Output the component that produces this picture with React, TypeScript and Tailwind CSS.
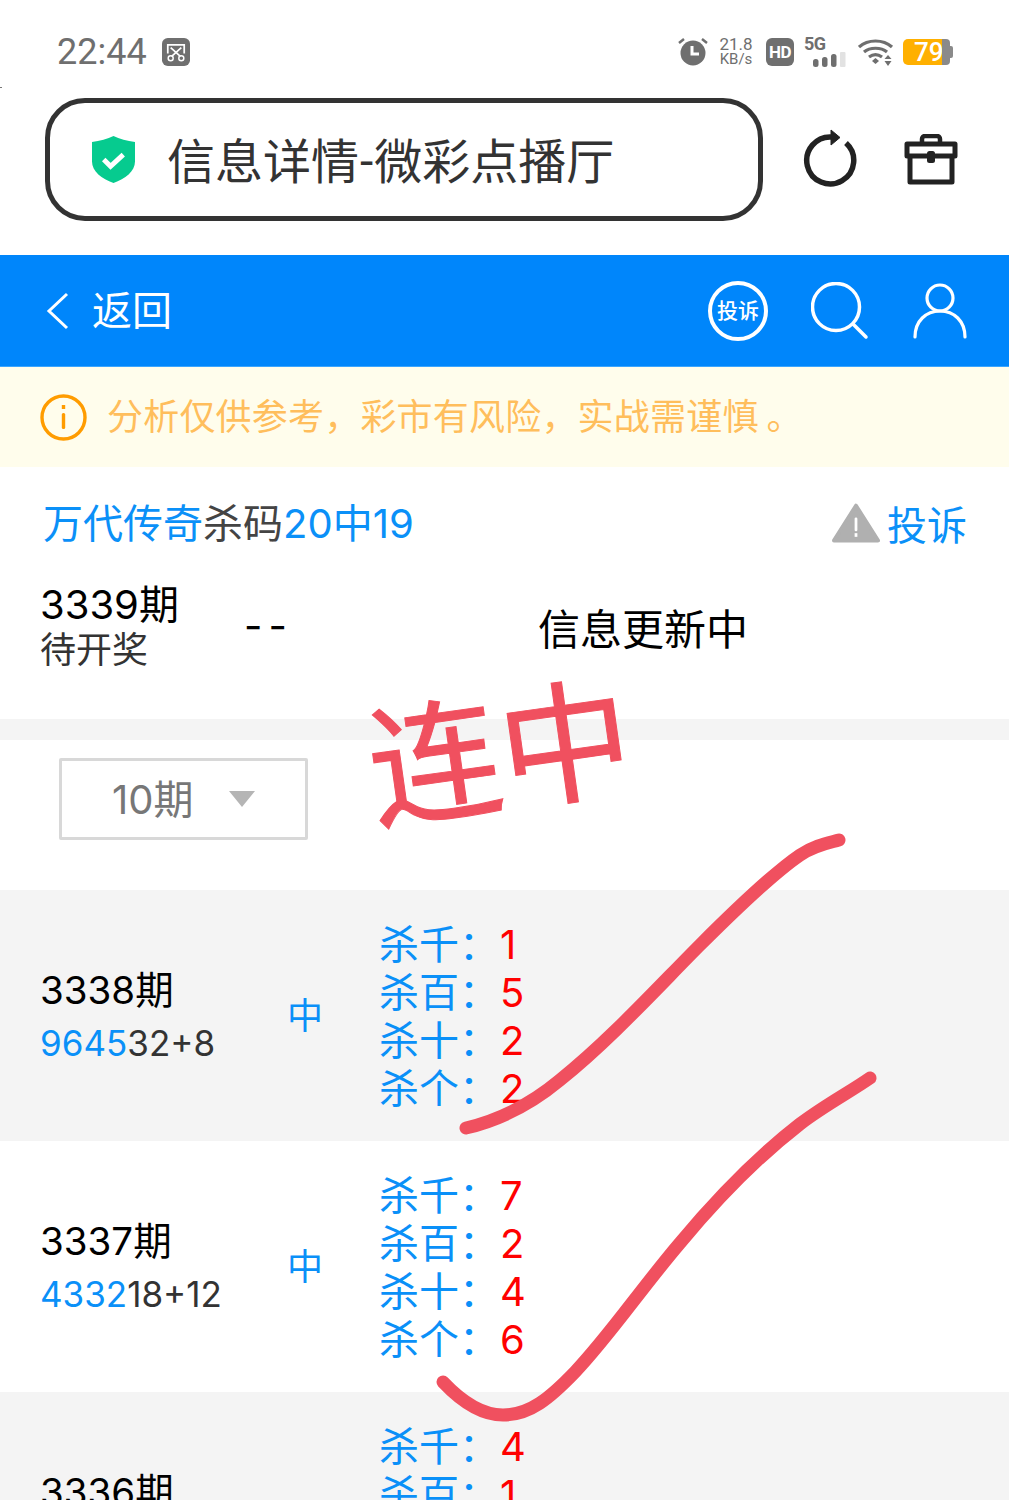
import React from 'react';

const rows = [
  { issue: '3338期', hit: '9645', rest: '32+8', kills: ['1', '5', '2', '2'], bg: 'bg-[#f4f4f4]' },
  { issue: '3337期', hit: '4332', rest: '18+12', kills: ['7', '2', '4', '6'], bg: 'bg-white' },
  { issue: '3336期', hit: '', rest: '', kills: ['4', '1', '', ''], bg: 'bg-[#f4f4f4]' },
];
const killLabels = ['杀千：', '杀百：', '杀十：', '杀个：'];

const StatusIcons: React.FC = () => (
  <div className="flex items-center font-['Roboto'] text-[#6f6f6f]">
    {/* alarm */}
    <svg width="30" height="30" viewBox="0 0 30 30" className="mr-[11px]">
      <circle cx="15" cy="16" r="12.500" fill="#6f6f6f" />
      <path d="M14 9v8h7" fill="none" stroke="#fff" strokeWidth="3" />
      <path d="M1 6l5-4M29 6l-5-4" stroke="#6f6f6f" strokeWidth="2.500" />
    </svg>
    <div className="mr-[13px] flex w-[34px] flex-col items-center text-[17px] leading-[15px]">
      <span>21.8</span>
      <span className="text-[15px]">KB/s</span>
    </div>
    {/* HD */}
    <div className="mr-[10px] flex h-[28px] w-[28px] items-center justify-center rounded-[6px] bg-[#6f6f6f] text-[17px] leading-none font-bold tracking-[-0.5px] text-white">
      HD
    </div>
    {/* 5G signal */}
    <div className="mr-[12px] flex h-[30px] w-[42px] flex-col">
      <span className="text-[18px] leading-[14px] font-bold tracking-[-0.5px]">5G</span>
      <svg width="42" height="15" viewBox="0 0 42 15" className="mt-[1px]">
        <rect x="9" y="7" width="5.500" height="8" rx="2.500" fill="#6f6f6f" />
        <rect x="18" y="5" width="5.500" height="10" rx="2.500" fill="#6f6f6f" />
        <rect x="27" y="2" width="5.500" height="13" rx="2.500" fill="#6f6f6f" />
        <rect x="36" y="0" width="5.500" height="15" rx="1" fill="#e2e2e2" />
      </svg>
    </div>
    {/* wifi */}
    <svg width="36" height="28" viewBox="0 0 36 28" className="mr-[9px]">
      <path d="M1 9C10 1 25 1 34 9M6 14c6-5 17-5 23 0M11 19c4-3 9-3 13 0" fill="none" stroke="#6f6f6f" strokeWidth="3.200" />
      <path d="M14 23l3.500-3 3.500 3-3.500 3z" fill="#6f6f6f" />
      <path d="M30 17l3.500 4h-7zM30 28l3.500-5h-7z" fill="#6f6f6f" />
    </svg>
    {/* battery */}
    <div className="flex items-center">
      <div className="flex h-[26px] w-[39px] items-center rounded-l-[5px] bg-[#ffb000] pl-[11px] text-[26px] leading-none font-medium whitespace-nowrap text-white">
        79
      </div>
      <div className="h-[26px] w-[8px] rounded-r-[4px] bg-[#8a8a8a]" />
      <div className="h-[12px] w-[3px] rounded-r-[2px] bg-[#8a8a8a]" />
    </div>
  </div>
);

export default function App() {
  return (
    <div
      className="relative h-[1500px] w-[1009px] overflow-hidden bg-white"
      style={{ fontFamily: 'Inter, "Noto Sans CJK SC", sans-serif' }}
    >
      <div className="absolute top-[87px] left-0 h-[1px] w-[2px] bg-[#777]" />

      {/* Status bar */}
      <div className="flex h-[98px] items-center justify-between pt-[6px] pr-[56px] pl-[57px]">
        <div className="flex items-center">
          <span className="font-['Roboto'] text-[36px] leading-none text-[#6f6f6f]">22:44</span>
          <svg width="28" height="28" viewBox="0 0 29 29" className="ml-[15px]">
            <rect width="29" height="29" rx="6" fill="#6f6f6f" />
            <path d="M6 16V7h17v9" fill="none" stroke="#fff" strokeWidth="1.800" />
            <path d="M9 10l10 9M20 10l-10 9" stroke="#fff" strokeWidth="1.800" />
            <circle cx="9" cy="21" r="2.600" fill="none" stroke="#fff" strokeWidth="1.500" />
            <circle cx="20" cy="21" r="2.600" fill="none" stroke="#fff" strokeWidth="1.500" />
          </svg>
        </div>
        <StatusIcons />
      </div>

      {/* Address bar */}
      <div className="flex h-[157px] items-start pl-[45px]">
        <div className="flex h-[123px] w-[718px] items-center rounded-[40px] border-[5px] border-[#333333] pl-[42px]">
          <svg width="43" height="47" viewBox="0 0 44 48">
            <path d="M22 0c6 3 14 5 22 6v20c0 10-10 18-22 22C10 44 0 36 0 26V6c8-1 16-3 22-6z" fill="#06cb8f" />
            <path d="M12 24l7 7 13-12" fill="none" stroke="#fff" strokeWidth="5" />
          </svg>
          <span className="mt-[4px] ml-[32px] flex items-center text-[48px] leading-none whitespace-nowrap text-[#333333]">
            信息详情<span className="mx-[1px] font-['Roboto']">-</span>微彩点播厅
          </span>
        </div>
        <svg width="56" height="60" viewBox="0 0 56 60" className="mt-[31px] ml-[38px]">
          <path d="M31 8A23.500 23.500 0 1 0 45 14" fill="none" stroke="#222" strokeWidth="5.500" />
          <path d="M30 1l9 7.500-9 7.500z" fill="#222" stroke="#222" strokeWidth="1" strokeLinejoin="round" />
        </svg>
        <svg width="54" height="52" viewBox="0 0 54 52" className="mt-[36px] ml-[47px]">
          <path d="M18 10V5a3 3 0 0 1 3-3h12a3 3 0 0 1 3 3v5" fill="none" stroke="#222" strokeWidth="4.500" />
          <path d="M3 10h48v12H3zM6 22v26h42V22" fill="none" stroke="#222" strokeWidth="5" strokeLinejoin="round" />
          <rect x="23" y="17" width="8" height="12" rx="2.500" fill="#222" />
        </svg>
      </div>

      {/* Blue nav */}
      <div className="flex h-[112px] items-center justify-between border-b-[1px] border-[#3aa5ff] bg-[#0086fb] pr-[42px] pl-[45px] text-white">
        <div className="flex items-center">
          <svg width="26" height="40" viewBox="0 0 26 40">
            <path d="M22 3L4 20l18 17" fill="none" stroke="#fff" strokeWidth="3" />
          </svg>
          <span className="ml-[21px] text-[40px] leading-none">返回</span>
        </div>
        <div className="flex items-center">
          <div className="flex h-[60px] w-[60px] items-center justify-center rounded-full border-[4px] border-white text-[21px] leading-none font-medium whitespace-nowrap">
            投诉
          </div>
          <svg width="58" height="58" viewBox="0 0 58 58" className="ml-[43px]">
            <circle cx="25" cy="25" r="23.500" fill="none" stroke="#fff" strokeWidth="3.500" />
            <path d="M42 42l13 13" stroke="#fff" strokeWidth="3.500" strokeLinecap="round" />
          </svg>
          <svg width="54" height="56" viewBox="0 0 54 56" className="ml-[44px]">
            <circle cx="27" cy="15" r="13" fill="none" stroke="#fff" strokeWidth="3.200" />
            <path d="M2 54c0-16 11-26 25-26s25 10 25 26" fill="none" stroke="#fff" strokeWidth="3.200" strokeLinecap="round" />
          </svg>
        </div>
      </div>

      {/* Notice */}
      <div className="flex h-[100px] items-center bg-[#fffdec] pl-[40px]">
        <svg width="47" height="47" viewBox="0 0 47 47">
          <circle cx="23.500" cy="23.500" r="21.500" fill="none" stroke="#ff9c00" strokeWidth="3.400" />
          <rect x="21.800" y="11" width="3.400" height="4" fill="#ff9c00" />
          <rect x="21.800" y="19" width="3.400" height="16" rx="1.500" fill="#ff9c00" />
        </svg>
        <span className="ml-[20px] text-[36px] leading-none tracking-[0.2px] whitespace-nowrap text-[#ffbe5c]">
          分析仅供参考，彩市有风险，实战需谨慎<span className="ml-[8px]">。</span>
        </span>
      </div>

      {/* Title */}
      <div className="flex h-[116px] items-center justify-between pr-[42px] pb-[2px] pl-[43px]">
        <div className="text-[40px] leading-none text-[#0a90f8]">
          万代传奇<span className="text-[#444444]">杀码</span>20中19
        </div>
        <div className="flex items-center">
          <svg width="48" height="42" viewBox="0 0 52 44" className="mb-[2px]">
            <path d="M26 3L50 41H2z" fill="#b0b0b0" stroke="#b0b0b0" strokeWidth="4" strokeLinejoin="round" />
            <rect x="24.500" y="16" width="3" height="15" rx="1.500" fill="#fff" />
            <rect x="24.500" y="33" width="3" height="4" fill="#fff" />
          </svg>
          <span className="mt-[4px] ml-[7px] text-[40px] leading-none text-[#0a90f8]">投诉</span>
        </div>
      </div>

      {/* Current issue */}
      <div className="flex h-[136px] items-start pl-[40px] text-black">
        <div className="flex w-[204px] flex-col">
          <span className="text-[40px] leading-[44px]">3339期</span>
          <span className="text-[36px] leading-[46px] text-[#333333]">待开奖</span>
        </div>
        <span className="mt-[19px] w-[294px] text-[40px] leading-[48px] tracking-[6px]">--</span>
        <span className="mt-[23px] text-[42px] leading-[48px]">信息更新中</span>
      </div>
      <div className="h-[21px] bg-[#f4f4f4]" />

      {/* Period select */}
      <div className="flex h-[150px] items-start pt-[18px] pl-[59px]">
        <div className="flex h-[82px] w-[249px] items-center rounded-[2px] border-[3px] border-[#d8d8d8] pl-[50px]">
          <span className="mt-[2px] text-[40px] leading-none text-[#777777]">10期</span>
          <span className="ml-[35px] h-0 w-0 border-x-[13px] border-t-[16px] border-x-transparent border-t-[#b5b5b5]" />
        </div>
      </div>

      {/* Results */}
      {rows.map((row) => (
        <div key={row.issue} className={`flex h-[251px] items-center pl-[40px] ${row.bg}`}>
          <div className="flex w-[247px] flex-col pt-[2px]">
            <span className="text-[38.5px] leading-[52px] text-black">{row.issue}</span>
            <span className="h-[54px] text-[35px] leading-[54px] text-[#333333]">
              <span className="text-[#0a90f8]">{row.hit}</span>
              {row.rest}
            </span>
          </div>
          <span className="w-[92px] text-[36px] leading-none text-[#0a90f8]">{row.hit && '中'}</span>
          <div className="flex flex-col pt-[3px]">
            {killLabels.map((label, i) => (
              <div key={label} className="flex h-[48px] items-center text-[40px] leading-[48px]">
                <span className="w-[121px] text-[#0a90f8]">{label}</span>
                <span className="text-[#ff0000]">{row.kills[i]}</span>
              </div>
            ))}
          </div>
        </div>
      ))}

      {/* Hand-written marks */}
      <span className="absolute top-[670px] left-[368px] -rotate-[8deg] text-[132px] leading-[168px] font-normal whitespace-nowrap text-[#f0505f] [-webkit-text-stroke:1px_#f0505f]">
        连中
      </span>
      <svg width="1009" height="1500" viewBox="0 0 1009 1500" className="pointer-events-none absolute top-0 left-0">
        <path
          d="M466 1128C500 1120 530 1105 560 1080C610 1040 660 985 700 945C740 905 775 872 800 855C815 845 828 843 839 840"
          fill="none"
          stroke="#f0505f"
          strokeWidth="13"
          strokeLinecap="round"
        />
        <path
          d="M443 1382C460 1400 480 1415 503 1415C530 1415 550 1398 575 1372C610 1335 640 1290 680 1243C720 1195 760 1155 800 1124C825 1105 850 1092 870 1078"
          fill="none"
          stroke="#f0505f"
          strokeWidth="13"
          strokeLinecap="round"
        />
      </svg>
    </div>
  );
}
